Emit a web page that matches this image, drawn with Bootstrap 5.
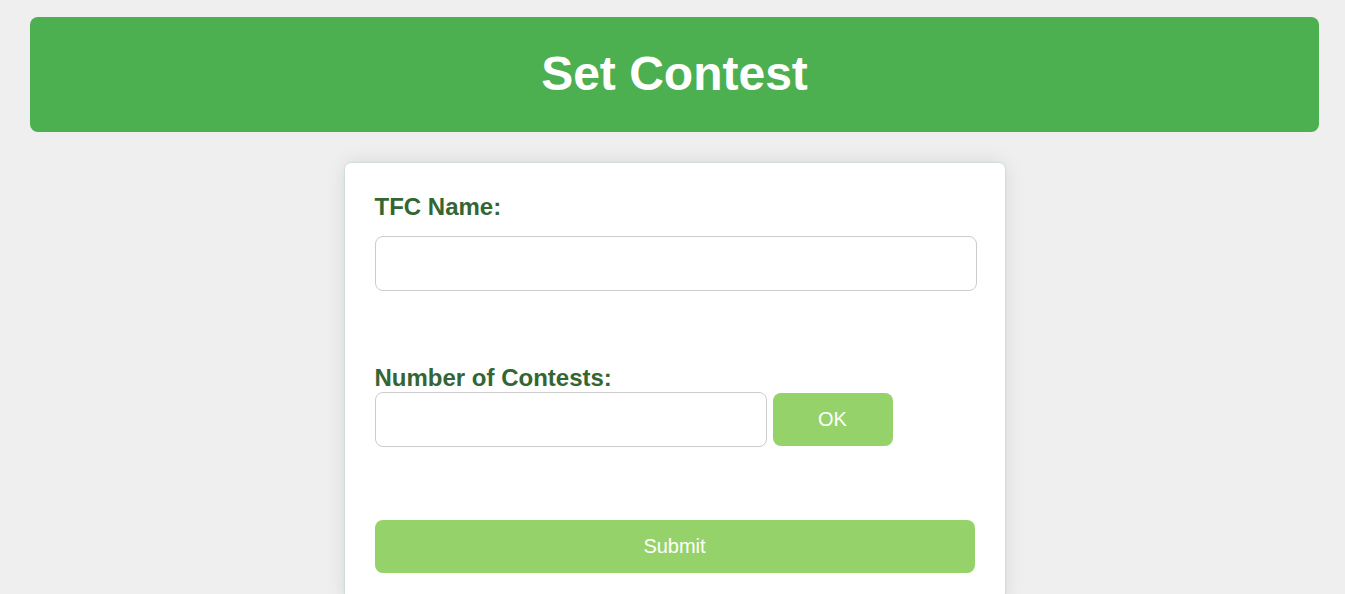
<!DOCTYPE html>
<html lang="en">
<head>
<meta charset="utf-8">
<meta name="viewport" content="width=device-width, initial-scale=1">
<title>Set Contest</title>
<link href="https://cdn.jsdelivr.net/npm/bootstrap@5.3.0/dist/css/bootstrap.min.css" rel="stylesheet">
<style>
html { scrollbar-width: none; }
html::-webkit-scrollbar { display: none; }
body { background: #efefef; font-family: "Liberation Sans", Arial, sans-serif; }
.page { padding: 17px 26px 0 30px; }
.banner { background: #4caf50; border-radius: 8px; padding: 29px 20px 31px; margin-bottom: 31px; }
.banner h1 { font-size: 48px; line-height: 55px; font-weight: 700; }
.panel { max-width: 660px; padding: 30px; border-radius: 6px; box-shadow: 0 0 1px 1px rgba(76, 200, 110, .16), 0 0 20px rgba(0, 0, 0, .1); }
.field-label { display: block; color: #336633; font-size: 24px; line-height: 28px; font-weight: 700; }
.label-gap { margin-bottom: 15px; }
.field { height: 55px; border: 1px solid #ccc; border-radius: 8px; font-size: 20px; }
.name-field { width: calc(100% + 2px); }
.count-field { width: 392px; }
.count-row { gap: 6px; }
.btn-lime { --bs-btn-bg: #95d36a; --bs-btn-color: #fff; --bs-btn-hover-bg: #86c45a; --bs-btn-hover-color: #fff; border: 0; height: 53px; border-radius: 8px; font-size: 20px; padding: 0 12px 2px; }
.ok-btn { width: 120px; }
.group-gap { margin-bottom: 73px; }
</style>
</head>
<body>
<div class="page">
  <header class="banner text-center text-white"><h1 class="m-0">Set Contest</h1></header>
  <main class="panel bg-white mx-auto">
    <form>
      <div class="group-gap">
        <label class="field-label label-gap" for="tfc">TFC Name:</label>
        <input class="form-control field name-field" type="text" id="tfc">
      </div>
      <div class="group-gap">
        <label class="field-label" for="count">Number of Contests:</label>
        <div class="count-row d-flex align-items-center">
          <input class="form-control field count-field" type="text" id="count">
          <button class="btn btn-lime ok-btn" type="button">OK</button>
        </div>
      </div>
      <button class="btn btn-lime w-100" type="submit">Submit</button>
    </form>
  </main>
</div>
<script src="https://cdn.jsdelivr.net/npm/bootstrap@5.3.0/dist/js/bootstrap.bundle.min.js"></script>
</body>
</html>
